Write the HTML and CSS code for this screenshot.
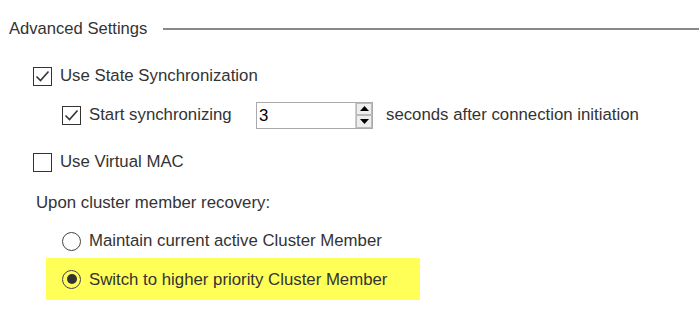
FILE: index.html
```html
<!DOCTYPE html>
<html lang="en">
<head>
    <meta charset="UTF-8">
    <meta name="viewport" content="width=device-width, initial-scale=1.0">
    <title>Advanced Settings</title>
    <link rel="stylesheet" href="styles.css">
</head>
<body>

    <div class="section-header">
        <span class="section-title">Advanced Settings</span>
        <span class="section-line"></span>
    </div>

    <div class="row level-1 row-sync">
        <span class="check checked">
            <svg width="15" height="12" viewBox="0 0 15 12"><path d="M1.5 6.5 L5.5 10.5 L13.5 1.5" fill="none" stroke="#333" stroke-width="1.6"/></svg>
        </span>
        <span class="label">Use State Synchronization</span>
    </div>

    <div class="row level-2 row-start">
        <span class="check checked">
            <svg width="15" height="12" viewBox="0 0 15 12"><path d="M1.5 6.5 L5.5 10.5 L13.5 1.5" fill="none" stroke="#333" stroke-width="1.6"/></svg>
        </span>
        <span class="label label-start">Start synchronizing</span>
        <div class="spin-box">
            <span class="spin-value">3</span>
            <div class="spin-buttons">
                <span class="spin-btn"><svg width="9" height="5" viewBox="0 0 9 5"><path d="M0 5 L4.5 0 L9 5 Z" fill="#000"/></svg></span>
                <span class="spin-btn"><svg width="9" height="5" viewBox="0 0 9 5"><path d="M0 0 L9 0 L4.5 5 Z" fill="#000"/></svg></span>
            </div>
        </div>
        <span class="label label-after">seconds after connection initiation</span>
    </div>

    <div class="row level-1 row-mac">
        <span class="check"></span>
        <span class="label">Use Virtual MAC</span>
    </div>

    <div class="row row-upon">
        <span class="label">Upon cluster member recovery:</span>
    </div>

    <div class="row level-2 row-radio">
        <span class="radio"></span>
        <span class="label">Maintain current active Cluster Member</span>
    </div>

    <div class="row row-radio highlight">
        <span class="radio selected"><span class="radio-dot"></span></span>
        <span class="label">Switch to higher priority Cluster Member</span>
    </div>

</body>
</html>
```

FILE: styles.css
```css
body { margin: 0; font-family: "Liberation Sans", Arial, sans-serif; font-size: 16.8px; color: #333; background: #fff; }

.section-header { display: flex; align-items: center; height: 57px; padding-left: 9px; }
.section-title { font-size: 16.6px; }
.section-line { flex: 1; margin-left: 16px; border-top: 2px solid #888; }

.row { display: flex; align-items: center; }
.level-1 { padding-left: 33px; }
.level-2 { padding-left: 62px; }

.row-sync { height: 38px; }
.row-start { height: 40px; }
.row-mac { height: 38px; margin-top: 8px; }
.row-upon { height: 44px; padding-left: 36px; }
.row-radio { height: 32px; }

.check { width: 17px; height: 17px; border: 1.5px solid #333; display: flex; align-items: center; justify-content: center; margin-right: 8px; flex-shrink: 0; }

.radio { width: 17px; height: 17px; border: 1.5px solid #444; border-radius: 50%; display: flex; align-items: center; justify-content: center; margin-right: 8px; flex-shrink: 0; }
.radio-dot { width: 10px; height: 10px; border-radius: 50%; background: #333; }

.label-start { width: 167px; }
.label-after { margin-left: 13px; }

.spin-box { display: flex; width: 115px; height: 25px; border: 1px solid #aaa; }
.spin-value { flex: 1; padding-left: 2px; line-height: 25px; color: #000; }
.spin-buttons { display: flex; flex-direction: column; width: 16px; border-left: 1px solid #ccc; }
.spin-btn { flex: 1; display: flex; align-items: center; justify-content: center; background: #eee; border: 1px solid #bbb; }

.highlight { height: 42px; margin-top: 1px; margin-left: 46px; width: 358px; padding-left: 16px; background: #ffff57; }
.highlight .label { padding-top: 2px; }
```
